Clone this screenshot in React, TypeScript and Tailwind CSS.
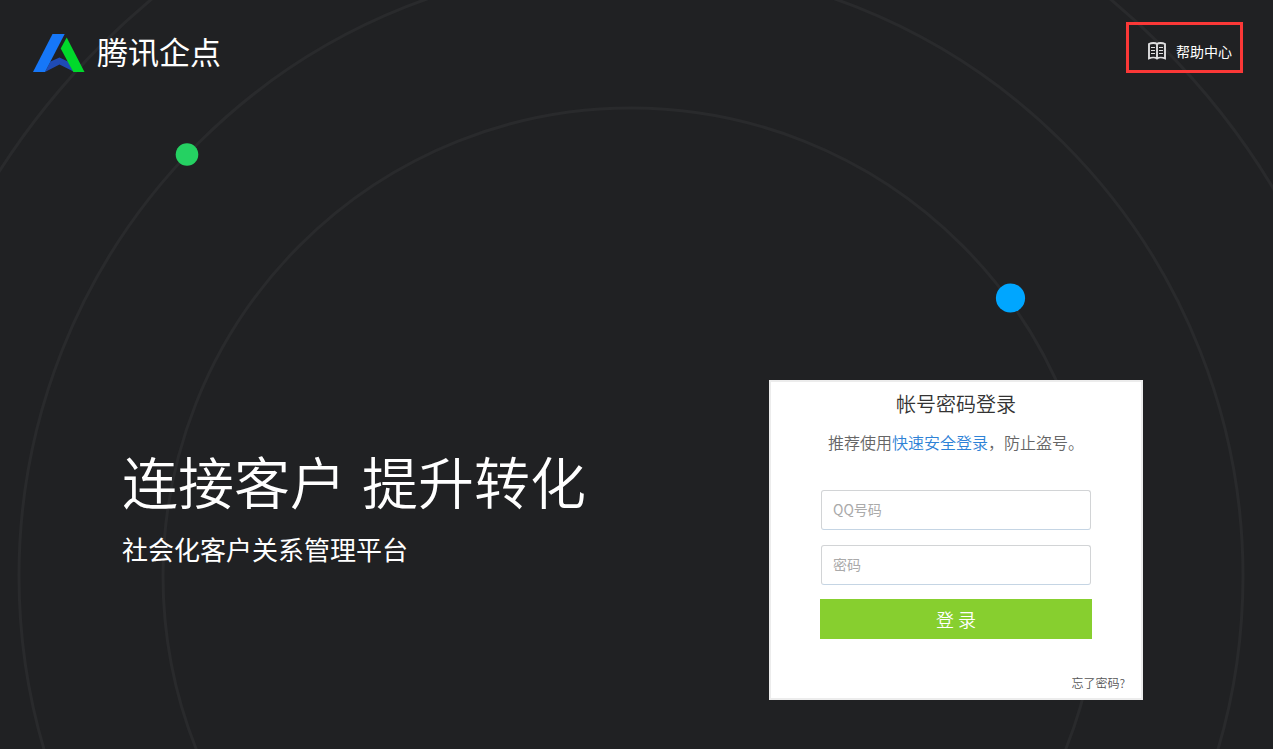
import { useState } from "react";

const orbits = [468, 612, 750];

function Orbits() {
  return (
    <svg
      className="absolute inset-0 h-full w-full"
      viewBox="0 0 1273 749"
      preserveAspectRatio="xMidYMid slice"
      aria-hidden="true"
    >
      {orbits.map((r) => (
        <circle key={r} cx="631" cy="576" r={r} fill="none" stroke="#292a2c" strokeWidth="3" />
      ))}
      <circle cx="187" cy="154.5" r="11.3" fill="#25d162" />
      <circle cx="1010.5" cy="298" r="14.6" fill="#00a6ff" />
    </svg>
  );
}

function Logo() {
  return (
    <a href="#" className="flex items-start gap-3">
      <svg className="h-10 w-13" viewBox="0 0 52 40" aria-hidden="true">
        <path d="M12 39 L17.5 28.5 L26.5 24.5 L36 29 L40.5 38.5 L26.5 31.5 Z" fill="#1f4bb5" />
        <path d="M0 39 L19.5 1 H31.7 L12 39 Z" fill="#1677f8" />
        <path d="M33.7 4.5 L51.5 39 H40.3 L27.7 15.5 Z" fill="#00d92b" />
      </svg>
      <span className="text-[31px] leading-9">腾讯企点</span>
    </a>
  );
}

function BookIcon() {
  return (
    <svg
      className="h-[18px] w-[18px]"
      viewBox="0 0 18 18"
      fill="none"
      stroke="#dededf"
      strokeWidth="1.9"
      aria-hidden="true"
    >
      <path d="M9 2 C7.5 0.7 3.5 0.7 1 2 V16.3 C3.5 15.4 7.5 15.4 9 16.6 C10.500 15.4 14.5 15.4 17 16.3 V2 C14.5 0.7 10.5 0.7 9 2 Z M9 2 V16.5" />
      <path d="M3 5.5 H7 M3 8.5 H7 M3 11.5 H7 M11 5.5 H15 M11 8.5 H15 M11 11.5 H15" strokeWidth="1.2" />
    </svg>
  );
}

function LoginCard() {
  const [account, setAccount] = useState("");
  const [password, setPassword] = useState("");
  const field =
    "h-10 w-full rounded-[3px] border border-[#d2d4d6] border-b-[#c5d5e4] bg-white px-[11px] pb-[2px] text-sm text-[#333333] placeholder:text-[#aaaaaa] outline-none";

  return (
    <section className="w-[374px] shrink-0 border-2 border-[#ececec] bg-white">
      <form className="flex flex-col" onSubmit={(e) => e.preventDefault()}>
        <h2 className="mt-2 text-center text-xl leading-7 font-[350] text-[#333333]">帐号密码登录</h2>
        <p className="mt-3 text-center text-base leading-6 font-[350] text-[#666666]">
          推荐使用
          <a href="#" className="text-[#2e82d6]">
            快速安全登录
          </a>
          ，防止盗号。
        </p>
        <div className="mx-[50px] mt-9 flex flex-col gap-[15px]">
          <input
            className={field}
            type="text"
            aria-label="QQ号码"
            placeholder="QQ号码"
            value={account}
            onChange={(e) => setAccount(e.target.value)}
          />
          <input
            className={field}
            type="password"
            aria-label="密码"
            placeholder="密码"
            value={password}
            onChange={(e) => setPassword(e.target.value)}
          />
        </div>
        <button type="submit" className="mx-[49px] mt-[14px] h-10 bg-[#87cf2f] text-lg font-[350] text-white">
          登 录
        </button>
        <a href="#" className="mt-[34px] mr-4 mb-[6px] self-end text-xs leading-[19px] font-[350] text-[#555555]">
          忘了密码?
        </a>
      </form>
    </section>
  );
}

export default function App() {
  return (
    <div className="relative min-h-screen overflow-hidden bg-[#202123] font-['Noto_Sans_CJK_SC',sans-serif] text-white">
      <Orbits />
      <div className="relative">
        <header className="flex items-start justify-between pt-[22px] pr-[30px] pl-[33px]">
          <div className="pt-[11px]">
            <Logo />
          </div>
          <a
            href="#"
            className="flex h-[51px] items-center gap-[10px] border-3 border-[#fb3837] pt-[6px] pr-2 pl-[19px] text-sm"
          >
            <BookIcon />
            帮助中心
          </a>
        </header>
        <main className="mt-[307px] flex items-start justify-between gap-8 pr-[130px] pb-[49px] pl-[122px]">
          <div className="pt-16">
            <h1 className="flex flex-wrap gap-x-4 text-[56px] leading-[72px] font-[350]">
              <span>连接客户</span>
              <span>提升转化</span>
            </h1>
            <p className="mt-[15px] text-[26px] leading-9">社会化客户关系管理平台</p>
          </div>
          <LoginCard />
        </main>
      </div>
    </div>
  );
}
